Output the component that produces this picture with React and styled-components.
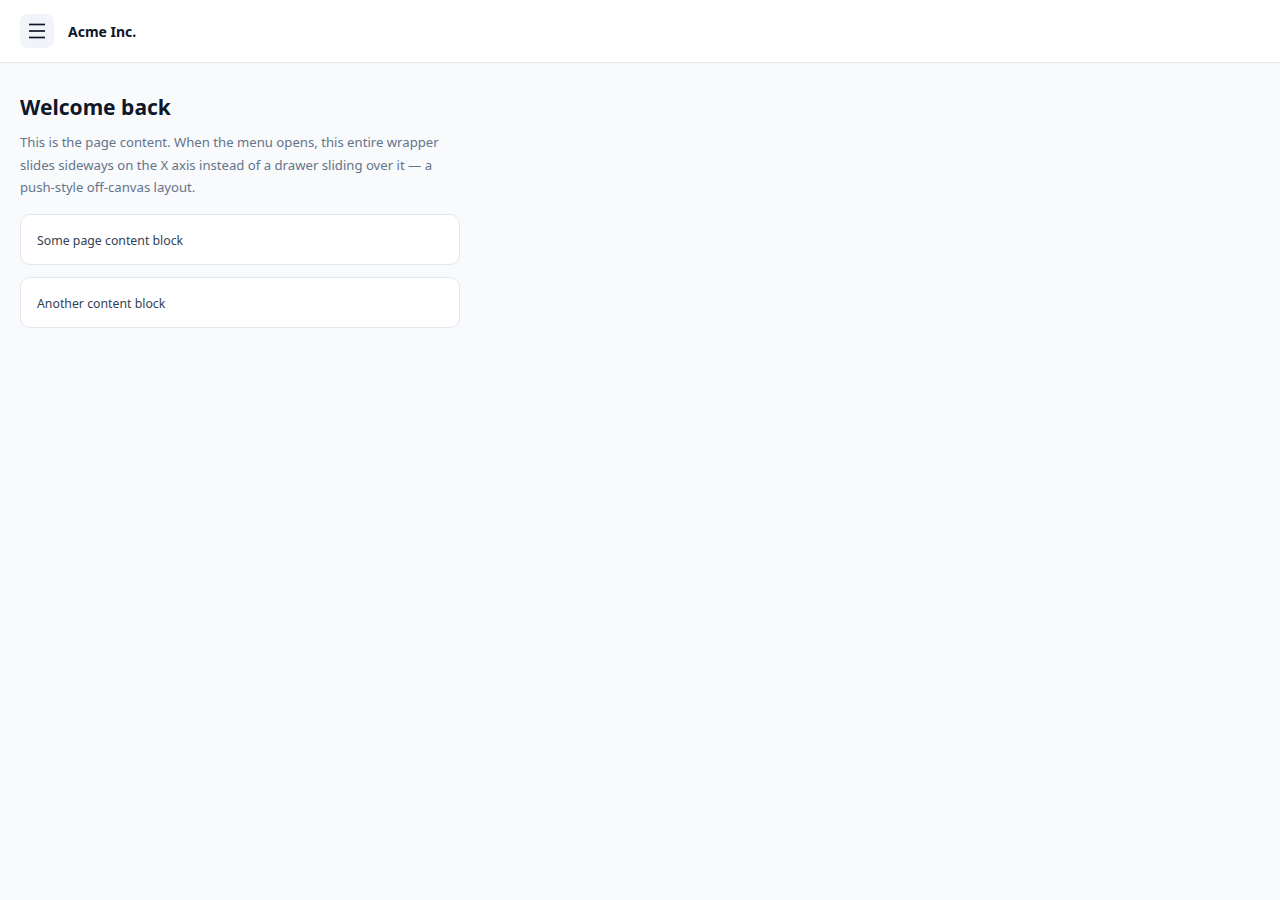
import styled, { createGlobalStyle } from 'styled-components';

const GlobalStyle = createGlobalStyle`
  * { box-sizing: border-box; }
  body {
    margin: 0;
    background: #f8fafc;
    font-family: "Noto Sans", "Open Sans", sans-serif;
    color: #0f172a;
  }
`;

const Wrapper = styled.div`
  min-height: 900px;
  background: #f8fafc;
`;

const TopBar = styled.header`
  height: 63px;
  display: flex;
  align-items: center;
  gap: 14px;
  padding: 0 20px;
  background: #ffffff;
  border-bottom: 1px solid #e2e8f0;
`;

const MenuButton = styled.button`
  width: 34px;
  height: 34px;
  display: flex;
  align-items: center;
  justify-content: center;
  padding: 0;
  border: none;
  border-radius: 8px;
  background: #f1f5f9;
  color: #0f172a;
  cursor: pointer;
`;

const Brand = styled.span`
  font-size: 14px;
  font-weight: 700;
  color: #0f172a;
`;

const Main = styled.main`
  padding: 30px 20px;
  max-width: 480px;
`;

const Title = styled.h1`
  margin: 0 0 10px;
  font-size: 21px;
  line-height: 28px;
  font-weight: 700;
  color: #0f172a;
`;

const Intro = styled.p`
  margin: 0 0 15px;
  font-size: 13.15px;
  line-height: 22.5px;
  color: #64748b;
`;

const Blocks = styled.div`
  display: flex;
  flex-direction: column;
  gap: 12px;
`;

const Block = styled.div`
  padding: 16px 16px 14px;
  background: #ffffff;
  border: 1px solid #e2e8f0;
  border-radius: 10px;
  font-size: 12.3px;
  line-height: 19px;
  color: #334155;
`;

function App() {
  return (
    <Wrapper>
      <GlobalStyle />
      <TopBar>
        <MenuButton aria-label="Open menu">
          <svg width="18" height="18" viewBox="0 0 18 18" fill="none" stroke="currentColor" strokeWidth="1.7">
            <line x1="1" y1="2.5" x2="17" y2="2.5" />
            <line x1="1" y1="9" x2="17" y2="9" />
            <line x1="1" y1="15.5" x2="17" y2="15.5" />
          </svg>
        </MenuButton>
        <Brand>Acme Inc.</Brand>
      </TopBar>
      <Main>
        <Title>Welcome back</Title>
        <Intro>
          This is the page content. When the menu opens, this entire wrapper slides sideways on the X axis instead of a drawer sliding over it — a push-style off-canvas layout.
        </Intro>
        <Blocks>
          <Block>Some page content block</Block>
          <Block>Another content block</Block>
        </Blocks>
      </Main>
    </Wrapper>
  );
}

export default App;
